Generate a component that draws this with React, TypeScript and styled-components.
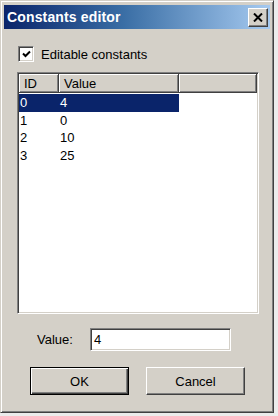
import React from "react";
import styled, { createGlobalStyle } from "styled-components";

const GlobalStyle = createGlobalStyle`
  html, body { margin: 0; padding: 0; }
  body {
    background: #ececec;
    font-family: "Liberation Sans", Arial, sans-serif;
    font-size: 13px;
    color: #000;
  }
`;

const Window = styled.div`
  box-sizing: border-box;
  width: 274px;
  height: 413px;
  background: #d4d0c8;
  border: 1px solid;
  border-color: #d4d0c8 #404040 #404040 #d4d0c8;
  box-shadow: inset 1px 1px #ffffff, inset -1px -1px #808080;
  padding: 3px;
  display: flex;
  flex-direction: column;
`;

const TitleBar = styled.div`
  height: 24px;
  margin-top: 1px;
  background: linear-gradient(to right, #0a246a 0%, #3a6ea5 45%, #a6caf0 100%);
  display: flex;
  align-items: center;
  justify-content: space-between;
  padding: 0 2px 0 3px;
`;

const Title = styled.span`
  color: #ffffff;
  font-weight: bold;
  font-size: 14px;
  letter-spacing: 0.15px;
`;

const CloseButton = styled.div`
  box-sizing: border-box;
  width: 20px;
  height: 19px;
  background: #d4d0c8;
  border: 1px solid;
  border-color: #ffffff #404040 #404040 #ffffff;
  box-shadow: inset -1px -1px #808080;
  display: flex;
  align-items: center;
  justify-content: center;
`;

const Content = styled.div`
  display: flex;
  flex-direction: column;
  padding: 17px 11px 0 13px;
`;

const CheckRow = styled.label`
  display: flex;
  align-items: center;
  gap: 7px;
  padding-left: 1px;
  height: 16px;
`;

const CheckBox = styled.span`
  box-sizing: border-box;
  width: 16px;
  height: 16px;
  background: #ffffff;
  border: 1px solid;
  border-color: #808080 #ffffff #ffffff #808080;
  box-shadow: inset 1px 1px #404040, inset -1px -1px #d4d0c8;
  display: flex;
  align-items: center;
  justify-content: center;
`;

const ListView = styled.div`
  box-sizing: border-box;
  margin-top: 10px;
  width: 242px;
  height: 242px;
  background: #ffffff;
  border: 1px solid;
  border-color: #808080 #ffffff #ffffff #808080;
  box-shadow: inset 1px 1px #404040, inset -1px -1px #d4d0c8;
  padding: 1px;
  display: flex;
  flex-direction: column;
`;

const HeaderRow = styled.div`
  display: flex;
  height: 19px;
  margin-bottom: 1px;
`;

const HeaderCell = styled.div<{ $w?: number }>`
  box-sizing: border-box;
  ${(p) => (p.$w ? `width: ${p.$w}px;` : "flex: 1;")}
  height: 19px;
  background: #d4d0c8;
  border-right: 1px solid #404040;
  border-bottom: 1px solid #404040;
  box-shadow: inset 1px 1px #ffffff, inset -1px -1px #808080;
  padding-left: 5px;
  line-height: 19px;
  white-space: nowrap;
`;

const Row = styled.div<{ $selected?: boolean }>`
  display: flex;
  height: 17.5px;
  width: 160px;
  background: ${(p) => (p.$selected ? "#0a246a" : "transparent")};
  color: ${(p) => (p.$selected ? "#ffffff" : "#000000")};
  line-height: 18px;
`;

const Cell = styled.div<{ $w: number }>`
  width: ${(p) => p.$w}px;
  padding-left: 1px;
  box-sizing: border-box;
`;

const ValueRow = styled.div`
  display: flex;
  align-items: center;
  margin-top: 14px;
  padding-left: 20px;
`;

const ValueLabel = styled.span`
  width: 53px;
`;

const TextInput = styled.div`
  box-sizing: border-box;
  width: 141px;
  height: 23px;
  background: #ffffff;
  border: 1px solid;
  border-color: #808080 #ffffff #ffffff #808080;
  box-shadow: inset 1px 1px #404040, inset -1px -1px #d4d0c8;
  padding: 0 3px;
  line-height: 21px;
`;

const ButtonRow = styled.div`
  display: flex;
  gap: 17px;
  margin-top: 16px;
  padding-left: 13px;
`;

const Button = styled.div<{ $default?: boolean }>`
  box-sizing: border-box;
  width: 99px;
  height: 28px;
  background: #d4d0c8;
  display: flex;
  align-items: center;
  justify-content: center;
  border: 1px solid;
  border-color: ${(p) =>
    p.$default ? "#000000" : "#ffffff #404040 #404040 #ffffff"};
  box-shadow: ${(p) =>
    p.$default
      ? "inset 1px 1px #ffffff, inset -1px -1px #404040, inset -2px -2px #808080"
      : "inset -1px -1px #808080"};
`;

const rows = [
  { id: "0", value: "4" },
  { id: "1", value: "0" },
  { id: "2", value: "10" },
  { id: "3", value: "25" },
];

export default function App() {
  return (
    <>
      <GlobalStyle />
      <Window>
        <TitleBar>
          <Title>Constants editor</Title>
          <CloseButton>
            <svg width="10" height="9" viewBox="0 0 10 9">
              <path
                d="M1 0.5 L9 8.5 M9 0.5 L1 8.5"
                stroke="#000"
                strokeWidth="2"
                fill="none"
              />
            </svg>
          </CloseButton>
        </TitleBar>
        <Content>
          <CheckRow>
            <CheckBox>
              <svg width="9" height="8" viewBox="0 0 9 8">
                <path
                  d="M1 3.5 L3.5 6 L8 1.5"
                  stroke="#000"
                  strokeWidth="2"
                  fill="none"
                />
              </svg>
            </CheckBox>
            <span>Editable constants</span>
          </CheckRow>
          <ListView>
            <HeaderRow>
              <HeaderCell $w={40}>ID</HeaderCell>
              <HeaderCell $w={120}>Value</HeaderCell>
              <HeaderCell />
            </HeaderRow>
            {rows.map((r, i) => (
              <Row key={r.id} $selected={i === 0}>
                <Cell $w={40}>{r.id}</Cell>
                <Cell $w={120}>{r.value}</Cell>
              </Row>
            ))}
          </ListView>
          <ValueRow>
            <ValueLabel>Value:</ValueLabel>
            <TextInput>4</TextInput>
          </ValueRow>
          <ButtonRow>
            <Button $default>OK</Button>
            <Button>Cancel</Button>
          </ButtonRow>
        </Content>
      </Window>
    </>
  );
}
